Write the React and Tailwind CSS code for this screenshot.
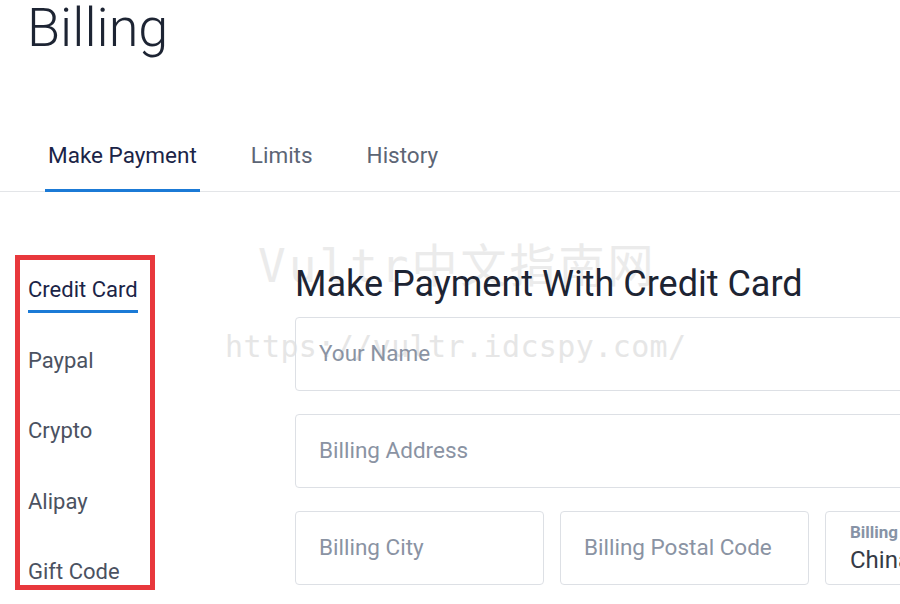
import React from 'react';

const METHODS = ['Credit Card', 'Paypal', 'Crypto', 'Alipay', 'Gift Code'];
const TABS = ['Make Payment', 'Limits', 'History'];

function Field({ placeholder, className = '' }) {
  return (
    <div className={`h-[74px] border border-[#dde0e5] rounded-[4px] flex items-center pl-[23px] ${className}`}>
      <span className="text-[22.5px] text-[#8a93a3]">{placeholder}</span>
    </div>
  );
}

export default function App() {
  return (
    <div className="relative w-full h-[604px] overflow-hidden bg-white font-['Roboto',sans-serif]">
      {/* watermark */}
      <div className="absolute left-[258px] top-[243px] text-[46px] leading-none tracking-[3px] text-[#ebebeb] font-['DejaVu_Sans_Mono','Noto_Sans_CJK_SC',monospace] whitespace-nowrap pointer-events-none">Vultr中文指南网</div>
      <div className="absolute left-[225px] top-[332px] text-[30px] leading-none tracking-[0.4px] text-[#e6e6e6] font-['DejaVu_Sans_Mono',monospace] whitespace-nowrap pointer-events-none">https://vultr.idcspy.com/</div>

      <div className="relative">
        <h1 className="pl-[27px] text-[54px] leading-none font-light text-[#1d2433] pt-[1px]">Billing</h1>

        <div className="mt-[87px] flex gap-[48px] pl-[45px] border-b border-[#e3e5e8]">
          {TABS.map((t, i) => (
            <div key={t} className={`px-[3px] pb-[20px] -mb-px text-[22.5px] leading-[27px] ${i === 0 ? 'text-[#1b2447] border-b-[3px] border-[#1b7ad6]' : 'text-[#5c6575] border-b-[3px] border-transparent'}`}>{t}</div>
          ))}
        </div>

        <div className="flex items-start">
          <div className="ml-[15px] mt-[63px] w-[140px] h-[335px] border-[5px] border-[#e8383c] pl-[8px] pt-[17px] shrink-0">
            <div className="flex flex-col items-start gap-[34.5px]">
              {METHODS.map((m, i) => (
                <div key={m} className={`text-[22px] leading-[26px] pb-[7px] border-b-[3px] ${i === 0 ? 'text-[#1b2447] border-[#1b7ad6]' : 'text-[#4b5261] border-transparent'}`}>{m}</div>
              ))}
            </div>
          </div>

          <div className="ml-[140px] mt-[71px] w-[1100px] shrink-0">
            <h2 className="text-[36px] leading-[43px] text-[#1d2433] mb-[11px]">Make Payment With Credit Card</h2>
            <div className="flex flex-col gap-[23px]">
              <Field placeholder="Your Name" />
              <Field placeholder="Billing Address" />
              <div className="flex gap-[16px]">
                <Field placeholder="Billing City" className="w-[249px]" />
                <Field placeholder="Billing Postal Code" className="w-[249px]" />
                <div className="h-[74px] w-[249px] border border-[#dde0e5] rounded-[4px] pl-[24px] pt-[10px]">
                  <div className="text-[17px] leading-[20px] font-bold text-[#8793a6]">Billing Country</div>
                  <div className="mt-[3px] text-[24px] leading-[30px] text-[#353b46]">China</div>
                </div>
              </div>
            </div>
          </div>
        </div>
      </div>
    </div>
  );
}
